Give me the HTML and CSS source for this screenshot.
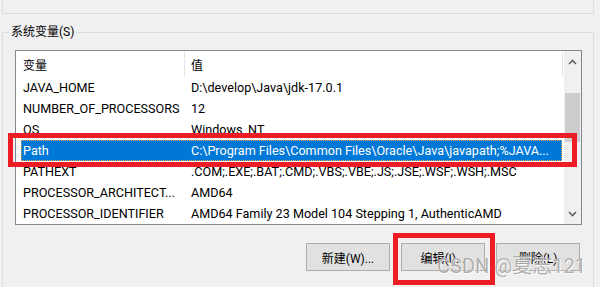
FILE: index.html
```html
<!DOCTYPE html>
<html lang="zh-CN">
    <head>
        <meta charset="UTF-8" />
        <title>系统变量</title>
        <link rel="stylesheet" href="styles.css">
    </head>
    <body>
        <!-- 위쪽 사용자 변수 박스 (아래 끝만 보임) -->
        <div class="user-box"></div>

        <fieldset class="sys-box">
            <legend>系统变量(S)</legend>

            <div class="list">
                <div class="table">
                    <div class="row head">
                        <div class="c1">变量</div>
                        <div class="c2">值</div>
                    </div>
                    <div class="row">
                        <div class="c1">JAVA_HOME</div>
                        <div class="c2">D:\develop\Java\jdk-17.0.1</div>
                    </div>
                    <div class="row">
                        <div class="c1">NUMBER_OF_PROCESSORS</div>
                        <div class="c2">12</div>
                    </div>
                    <div class="row">
                        <div class="c1">OS</div>
                        <div class="c2">Windows_NT</div>
                    </div>
                    <div class="row on">
                        <div class="c1">Path</div>
                        <div class="c2">C:\Program Files\Common Files\Oracle\Java\javapath;%JAVA...</div>
                    </div>
                    <div class="row">
                        <div class="c1">PATHEXT</div>
                        <div class="c2">.COM;.EXE;.BAT;.CMD;.VBS;.VBE;.JS;.JSE;.WSF;.WSH;.MSC</div>
                    </div>
                    <div class="row">
                        <div class="c1">PROCESSOR_ARCHITECT...</div>
                        <div class="c2">AMD64</div>
                    </div>
                    <div class="row">
                        <div class="c1">PROCESSOR_IDENTIFIER</div>
                        <div class="c2">AMD64 Family 23 Model 104 Stepping 1, AuthenticAMD</div>
                    </div>
                </div>

                <!-- 스크롤바 -->
                <div class="scroll">
                    <span class="arrow up">
                        <svg width="9" height="6" viewBox="0 0 9 6"><path d="M1 5 L4.5 1.5 L8 5" fill="none" stroke="#606060" stroke-width="1.6"/></svg>
                    </span>
                    <span class="track"><span class="thumb"></span></span>
                    <span class="arrow down">
                        <svg width="9" height="6" viewBox="0 0 9 6"><path d="M1 1 L4.5 4.5 L8 1" fill="none" stroke="#606060" stroke-width="1.6"/></svg>
                    </span>
                </div>
            </div>

            <div class="btns">
                <button>新建(W)...</button>
                <button>编辑(I)...</button>
                <button>删除(L)</button>
            </div>
        </fieldset>

        <!-- 빨간 표시 박스 -->
        <div class="mark mark-path"></div>
        <div class="mark mark-edit"></div>

        <div class="wm">CSDN @夏志121</div>
    </body>
</html>
```

FILE: styles.css
```css
body {
    position: relative;
    width: 600px;
    height: 287px;
    margin: 0;
    overflow: hidden;
    background-color: #f0f0f0;
    font-family: Roboto, "Noto Sans CJK SC", sans-serif;
    font-size: 12px;
    color: #000;
}

/* 위쪽 박스 */
.user-box {
    height: 13px;
    margin: 0 6px 0 2px;
    border: 1px solid #dcdcdc;
    border-top: 0;
}

/* 시스템 변수 그룹 */
.sys-box {
    height: 262px;
    min-width: 0;
    margin: 10px 6px 0 2px;
    padding: 0 11px 0 12px;
    border: 1px solid #dcdcdc;
    border-bottom: 0;
}
.sys-box legend {
    margin-left: -6px;
    padding: 0 2px;
    line-height: 16px;
}

/* 리스트 */
.list {
    display: flex;
    box-sizing: border-box;
    height: 175px;
    margin-top: 10px;
    border: 1px solid #828790;
    background-color: #fff;
}
.table {
    flex: 1;
}
.row {
    display: flex;
    align-items: center;
    width: 541px;
    height: 21px;
    margin-left: 5px;
    font-size: 12.6px;
    white-space: nowrap;
}
.row .c1 {
    box-sizing: border-box;
    width: 163px;
    padding-left: 2px;
    overflow: hidden;
}
.row .c2 {
    box-sizing: border-box;
    width: 378px;
    padding-left: 7px;
    overflow: hidden;
}

/* 헤더 */
.row.head {
    align-items: stretch;
    width: 547px;
    height: 26px;
    margin-left: 0;
    font-size: 12px;
}
.head .c1,
.head .c2 {
    display: flex;
    align-items: center;
    margin: 1px 0;
    border-right: 1px solid #e5e5e5;
}
.head .c1 {
    width: 169px;
    padding-left: 7px;
}
.head .c2 {
    padding-left: 6px;
}

/* 선택된 줄 */
.row.on {
    background-color: #0078d7;
    color: #fff;
    outline: 1px dotted #f0a848;
    outline-offset: -1px;
}

/* 스크롤바 */
.scroll {
    display: flex;
    flex-direction: column;
    width: 17px;
    background-color: #f0f0f0;
}
.arrow {
    display: flex;
    align-items: center;
    justify-content: center;
    height: 21px;
}
.arrow.down {
    padding-top: 2px;
}
.track {
    flex: 1;
}
.thumb {
    display: block;
    width: 15px;
    height: 49px;
    margin: 21px 0 0 1px;
    background-color: #cdcdcd;
}

/* 버튼 */
.btns {
    display: flex;
    justify-content: flex-end;
    gap: 11px;
    margin: 18px 2px 0 0;
}
.btns button {
    width: 84px;
    height: 28px;
    padding: 0;
    border: 1px solid #adadad;
    background-color: #e1e1e1;
    font: inherit;
    color: #000;
}

/* 빨간 박스 */
.mark {
    position: absolute;
    box-sizing: border-box;
    border: 5px solid #ee1c25;
}
.mark-path {
    top: 133px;
    left: 8px;
    width: 569px;
    height: 34px;
}
.mark-edit {
    top: 233px;
    left: 393px;
    width: 102px;
    height: 52px;
}

/* 워터마크 */
.wm {
    position: absolute;
    top: 254px;
    left: 437px;
    font-size: 20px;
    line-height: 24px;
    color: rgba(120, 120, 120, 0.6);
    text-shadow: 0 0 1px #fff, 1px 1px 0 rgba(255, 255, 255, 0.8);
    white-space: nowrap;
}
```
